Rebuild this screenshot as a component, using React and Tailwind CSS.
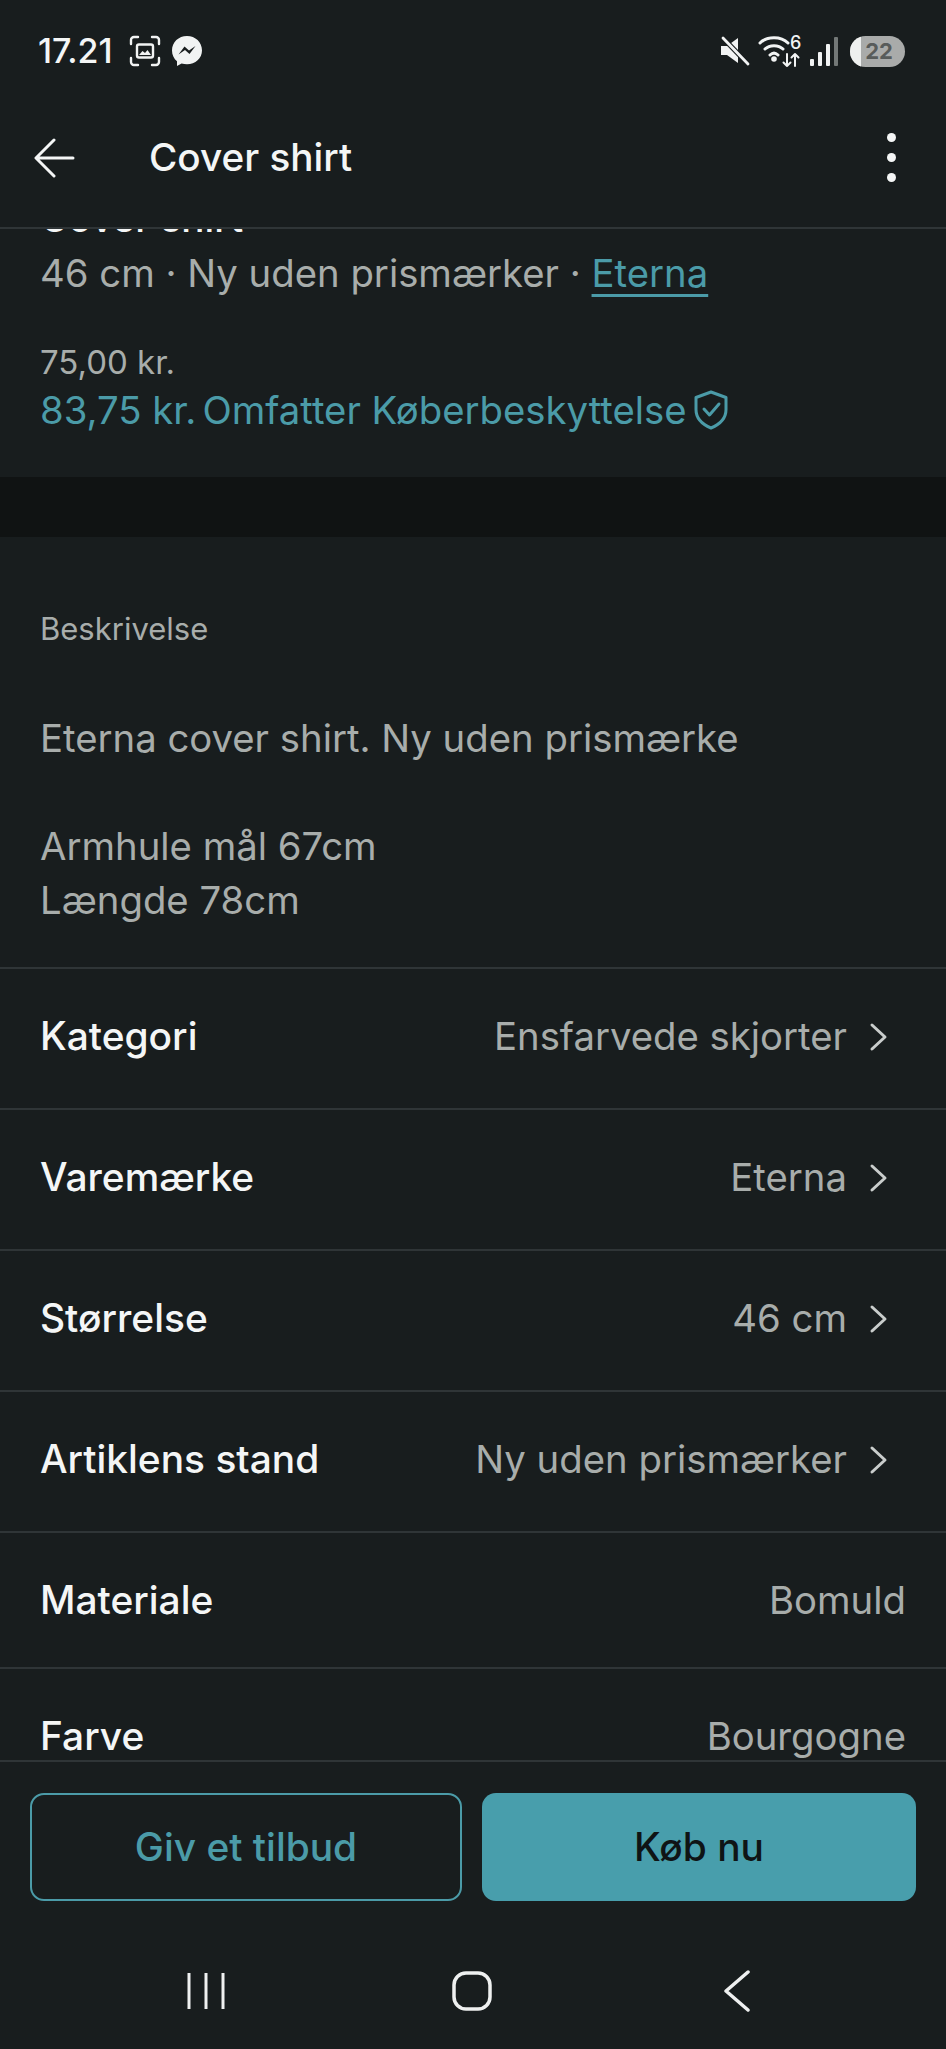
import React from "react";

const rows = [
  { label: "Kategori", value: "Ensfarvede skjorter", link: true },
  { label: "Varemærke", value: "Eterna", link: true },
  { label: "Størrelse", value: "46 cm", link: true },
  { label: "Artiklens stand", value: "Ny uden prismærker", link: true },
  { label: "Materiale", value: "Bomuld", link: false },
  { label: "Farve", value: "Bourgogne", link: false },
];

const Chevron = () => (
  <svg width="22" height="30" viewBox="0 0 22 30" fill="none" className="ml-[21px]">
    <path d="M4 3l13 12L4 27" stroke="#c9cdcc" strokeWidth="3" strokeLinecap="round" strokeLinejoin="round" />
  </svg>
);

const StatusBar = () => (
  <div className="flex h-[101px] items-center pl-[38px] pr-[41px] pt-[1px]">
    <span className="text-[34px] font-medium leading-none text-[#f4f6f6]">17.21</span>
    <svg width="32" height="32" viewBox="0 0 32 32" fill="none" className="ml-[16px]">
      <path d="M2 9V5a3 3 0 013-3h4M23 2h4a3 3 0 013 3v4M30 23v4a3 3 0 01-3 3h-4M9 30H5a3 3 0 01-3-3v-4" stroke="#f1f3f3" strokeWidth="2.4" strokeLinecap="round" />
      <rect x="8" y="9.5" width="16" height="13" rx="2" stroke="#f1f3f3" strokeWidth="2.4" />
      <path d="M10 20l3.5-4 2.5 2 2.5-3 3.5 5z" fill="#f1f3f3" />
    </svg>
    <svg width="30" height="30" viewBox="0 0 30 30" className="ml-[11px]">
      <path d="M15 0C6.6 0 0 6.2 0 14.4c0 4.4 1.9 8.2 5 10.8V30l4.6-2.5c1.7.5 3.5.8 5.4.8 8.4 0 15-6.200 15-13.900C30 6.200 23.400 0 15 0z" fill="#f1f3f3" />
      <path d="M6.500 18.500l6-8 4.500 4 6.500-4.500-6 8-4.500-4z" fill="#181d1e" />
    </svg>

    <div className="ml-auto flex items-center">
      <svg width="30" height="30" viewBox="0 0 30 30" fill="none">
        <path d="M1 10h6l11-8v25L7 19H1z" fill="#f1f3f3" />
        <path d="M3 2l25 26" stroke="#181d1e" strokeWidth="5" />
        <path d="M3 2l25 26" stroke="#f1f3f3" strokeWidth="2.800" strokeLinecap="round" />
      </svg>
      <svg width="44" height="34" viewBox="0 0 44 34" fill="none" className="ml-[8px] overflow-visible">
        <path d="M2 9c7-7 21-7 28 0M7 15c4.500-4.500 13.500-4.500 18 0M12 21c2.500-2.500 5.500-2.500 8 0" stroke="#f1f3f3" strokeWidth="3" strokeLinecap="round" />
        <circle cx="16" cy="25" r="2.800" fill="#f1f3f3" />
        <path d="M29 20v12M25.500 28.500l3.500 3.500 3.500-3.500M37 32V20M33.500 23.500L37 20l3.500 3.500" stroke="#f1f3f3" strokeWidth="2" strokeLinecap="round" strokeLinejoin="round" />
        <text x="32" y="15" fontSize="18" fontWeight="500" fill="#f1f3f3" fontFamily="Inter, sans-serif">6</text>
      </svg>
      <div className="ml-[8px] flex h-[30px] items-end gap-[4px]">
        <span className="h-[7px] w-[4px] rounded-[1px] bg-[#f1f3f3]" />
        <span className="h-[14px] w-[4px] rounded-[1px] bg-[#f1f3f3]" />
        <span className="h-[22px] w-[4px] rounded-[1px] bg-[#f1f3f3]" />
        <span className="h-[29px] w-[4px] rounded-[1px] bg-[#737877]" />
      </div>
      <div className="relative ml-[12px] flex h-[31px] w-[55px] items-center justify-center overflow-hidden rounded-full bg-[#a9abaa]">
        <span className="absolute inset-y-0 left-0 w-[11px] bg-[#eef0ef]" />
        <span className="relative pl-[3px] text-[22px] font-bold leading-none text-[#585c5b]">22</span>
      </div>
    </div>
  </div>
);

const Header = () => (
  <div className="flex h-[128px] items-center border-b-[2px] border-[#2f3537] pb-[13px] pl-[34px] pr-[50px]">
    <svg width="42" height="42" viewBox="0 0 42 42" fill="none">
      <path d="M39 21H3M20 3L2 21l18 18" stroke="#f4f6f6" strokeWidth="3" strokeLinecap="round" strokeLinejoin="round" />
    </svg>
    <span className="ml-[73px] text-[38.7px] font-medium leading-none text-[#f4f6f6]">Cover shirt</span>
    <div className="ml-auto flex flex-col gap-[11px]">
      <span className="h-[9px] w-[9px] rounded-full bg-[#f4f6f6]" />
      <span className="h-[9px] w-[9px] rounded-full bg-[#f4f6f6]" />
      <span className="h-[9px] w-[9px] rounded-full bg-[#f4f6f6]" />
    </div>
  </div>
);

const Summary = () => (
  <div className="bg-[#181d1e] px-[40px]">
    <div className="-mt-[34px] text-[38.7px] font-medium leading-[46px] text-[#f4f6f6]">Cover shirt</div>
    <div className="mt-[9px] text-[38.3px] leading-[46px] text-[#a8adab]">
      46 cm · Ny uden prismærker · <span className="text-[#4b9ba8] underline decoration-[3px] underline-offset-[7px]">Eterna</span>
    </div>
    <div className="mt-[47px] text-[33px] leading-[38px] text-[#a8adab]">75,00 kr.</div>
    <div className="mt-[6px] flex items-center pb-[44px] text-[38.3px] leading-[46px] text-[#4b9ba8]">
      <span>83,75 kr.</span>
      <span className="ml-[6px]">Omfatter Køberbeskyttelse</span>
      <svg width="36" height="40" viewBox="0 0 36 40" fill="none" className="ml-[6px]">
        <path d="M18 2l15 5.500v12c0 9-6.500 15-15 18.500C9.500 34.500 3 28.500 3 19.500v-12z" stroke="#4b9ba8" strokeWidth="3" strokeLinejoin="round" />
        <path d="M11 19l5.500 6L26 14" stroke="#4b9ba8" strokeWidth="3" strokeLinecap="round" strokeLinejoin="round" />
      </svg>
    </div>
  </div>
);

const Description = () => (
  <div className="h-[432px] border-b-[2px] border-[#2f3537] px-[40px] pt-[70px]">
    <div className="text-[31px] leading-[44px] text-[#a8adab]">Beskrivelse</div>
    <div className="mt-[60px] text-[38.3px] leading-[54px] text-[#a8adab]">
      <p>Eterna cover shirt. Ny uden prismærke</p>
      <p className="mt-[54px]">Armhule mål 67cm</p>
      <p>Længde 78cm</p>
    </div>
  </div>
);

const AttributeRow = ({ label, value, link }) => (
  <div className={`flex shrink-0 items-center border-b-[2px] border-[#2f3537] pl-[40px] ${link ? "h-[141px] pb-[4px] pr-[56px]" : "h-[136px] pt-[1px] pr-[40px]"}`}>
    <span className="text-[38.9px] font-medium text-[#f4f6f6]">{label}</span>
    <span className="ml-auto text-[38.3px] text-[#a8adab]">{value}</span>
    {link && <Chevron />}
  </div>
);

const App = () => (
  <div className="flex h-[2049px] w-[946px] flex-col overflow-hidden bg-[#181d1e] font-['Inter',sans-serif]">
    <StatusBar />
    <Header />
    <main className="min-h-0 flex-1 overflow-hidden border-b-[2px] border-[#2f3537]">
      <Summary />
      <div className="h-[60px] bg-[#101313]" />
      <Description />
      {rows.map((row) => (
        <AttributeRow key={row.label} {...row} />
      ))}
    </main>
    <div className="flex h-[287px] shrink-0 flex-col">
      <div className="flex gap-[20px] px-[30px] pt-[31px]">
        <button className="h-[108px] w-[432px] shrink-0 rounded-[14px] border-[2px] border-[#4b9ba8] text-[38.9px] font-medium text-[#4b9ba8]">Giv et tilbud</button>
        <button className="h-[108px] flex-1 rounded-[14px] bg-[#489eac] text-[38.9px] font-medium text-[#0f1415]">Køb nu</button>
      </div>
      <div className="flex flex-1 items-center pl-[186px] pt-[32px]">
        <svg width="40" height="40" viewBox="0 0 40 40" fill="none">
          <path d="M3 2v36M20 2v36M37 2v36" stroke="#eef0f0" strokeWidth="3" />
        </svg>
        <svg width="42" height="42" viewBox="0 0 42 42" fill="none" className="ml-[225px]">
          <rect x="3" y="3" width="36" height="36" rx="12" stroke="#eef0f0" strokeWidth="3.500" />
        </svg>
        <svg width="30" height="42" viewBox="0 0 30 42" fill="none" className="ml-[229px]">
          <path d="M26 2L4 21l22 19" stroke="#eef0f0" strokeWidth="3.500" strokeLinecap="round" strokeLinejoin="round" />
        </svg>
      </div>
    </div>
  </div>
);

export default App;
